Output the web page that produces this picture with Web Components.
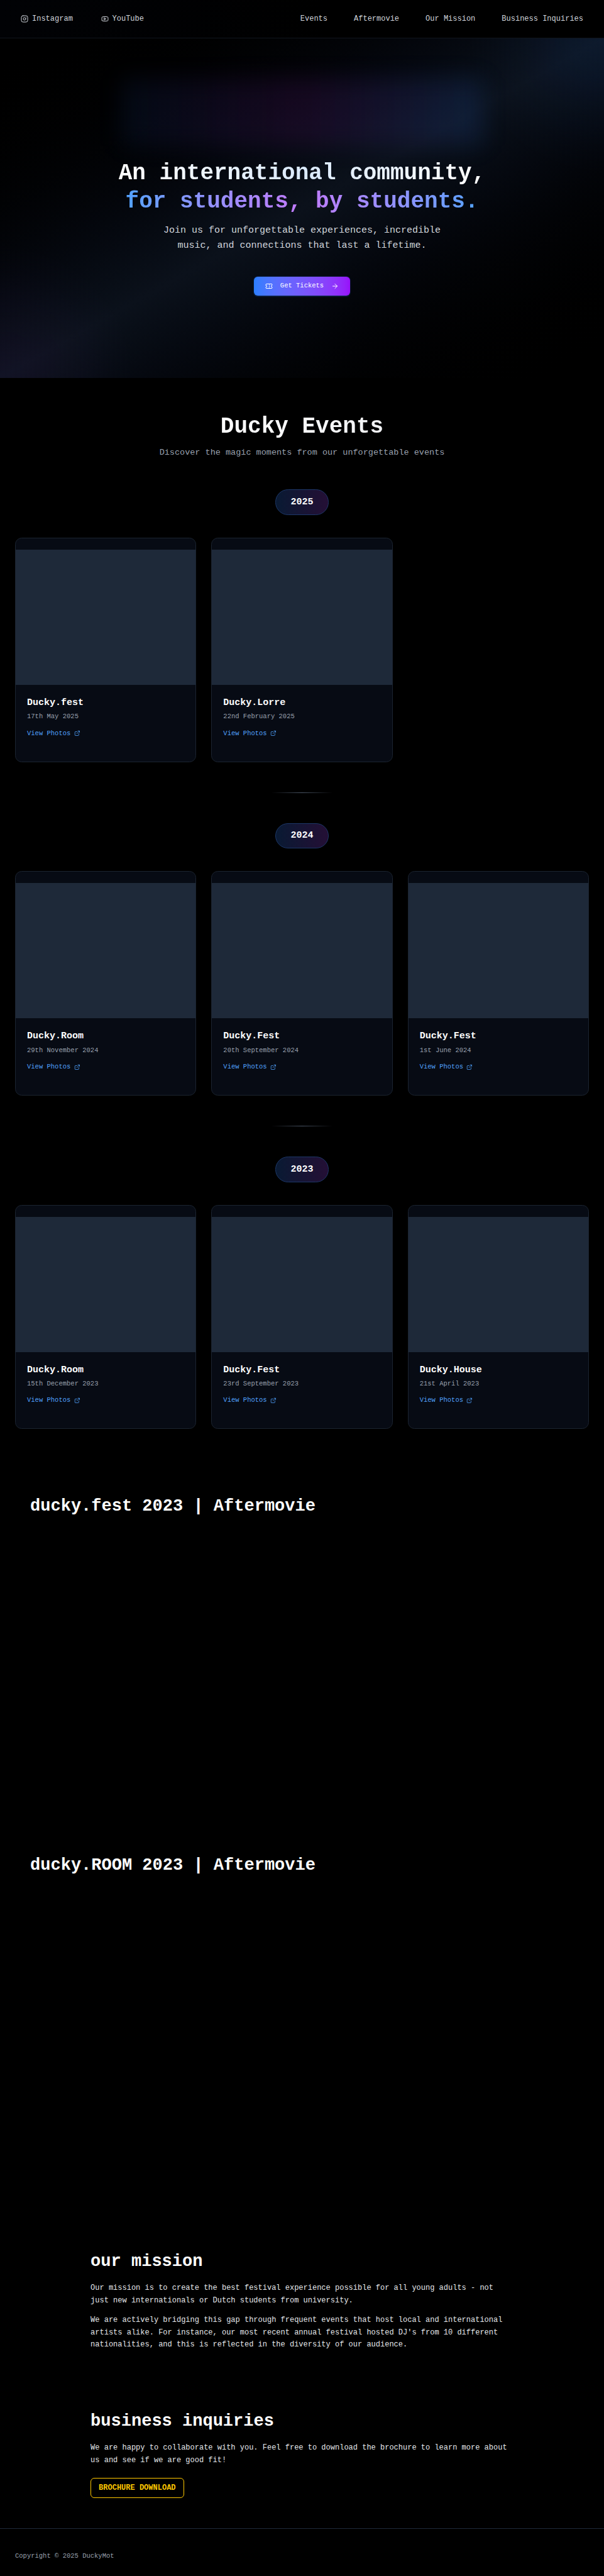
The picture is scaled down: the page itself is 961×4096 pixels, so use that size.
<!DOCTYPE html>
<html lang="en">
<head>
<meta charset="utf-8">
<title>Ducky</title>
<style>
  html { background: #000; font-size: 12.01px; }
  body {
    margin: 0; background: #000; color: #fff;
    font-family: "Liberation Mono", "Courier New", monospace;
    font-size: 1rem; line-height: 1.5; overflow-x: hidden;
  }
  main { display: block; }
  .events { padding: 5rem 2rem 8.99rem; }
  .films { display: flex; flex-direction: column; }
  .copy { padding: 5rem 0 4rem 12rem; display: flex; flex-direction: column; gap: 8rem; }
</style>
</head>
<body>
<site-header>
  <nav-link slot="social" icon="instagram">Instagram</nav-link>
  <nav-link slot="social" icon="youtube">YouTube</nav-link>
  <nav-link>Events</nav-link>
  <nav-link>Aftermovie</nav-link>
  <nav-link>Our Mission</nav-link>
  <nav-link>Business Inquiries</nav-link>
</site-header>
<main>
  <hero-banner>
    <span slot="lead">An international community,</span>
    <span slot="accent">for students, by students.</span>
    <span slot="text">Join us for unforgettable experiences, incredible<br>music, and connections that last a lifetime.</span>
    <ticket-button slot="action">Get Tickets</ticket-button>
  </hero-banner>
  <div class="events">
    <section-title>Ducky Events<span slot="sub">Discover the magic moments from our unforgettable events</span></section-title>
    <year-group year="2025">
      <event-card date="17th May 2025">Ducky.fest</event-card>
      <event-card date="22nd February 2025">Ducky.Lorre</event-card>
    </year-group>
    <soft-divider></soft-divider>
    <year-group year="2024">
      <event-card date="29th November 2024">Ducky.Room</event-card>
      <event-card date="20th September 2024">Ducky.Fest</event-card>
      <event-card date="1st June 2024">Ducky.Fest</event-card>
    </year-group>
    <soft-divider></soft-divider>
    <year-group year="2023">
      <event-card date="15th December 2023">Ducky.Room</event-card>
      <event-card date="23rd September 2023">Ducky.Fest</event-card>
      <event-card date="21st April 2023">Ducky.House</event-card>
    </year-group>
  </div>
  <div class="films">
    <after-movie>ducky.fest 2023 | Aftermovie</after-movie>
    <after-movie>ducky.ROOM 2023 | Aftermovie</after-movie>
  </div>
  <div class="copy">
    <text-section heading="our mission">
      <p>Our mission is to create the best festival experience possible for all young adults - not just new internationals or Dutch students from university.</p>
      <p>We are actively bridging this gap through frequent events that host local and international artists alike. For instance, our most recent annual festival hosted DJ's from 10 different nationalities, and this is reflected in the diversity of our audience.</p>
    </text-section>
    <text-section heading="business inquiries">
      <p>We are happy to collaborate with you. Feel free to download the brochure to learn more about us and see if we are good fit!</p>
      <outline-button slot="action">BROCHURE DOWNLOAD</outline-button>
    </text-section>
  </div>
</main>
<site-footer>Copyright © 2025 DuckyMot</site-footer>

<script>
const ICONS = {
  instagram: '<rect width="20" height="20" x="2" y="2" rx="5"/><path d="M16 11.37A4 4 0 1 1 12.63 8 4 4 0 0 1 16 11.37z"/><path d="M17.5 6.5h.01"/>',
  youtube: '<path d="M2.5 17a24.12 24.12 0 0 1 0-10 2 2 0 0 1 1.4-1.4 49.56 49.56 0 0 1 16.2 0A2 2 0 0 1 21.5 7a24.12 24.12 0 0 1 0 10 2 2 0 0 1-1.4 1.4 49.55 49.55 0 0 1-16.2 0A2 2 0 0 1 2.5 17"/><path d="m10 15 5-3-5-3z"/>',
  ticket: '<path d="M2 9a3 3 0 0 1 0 6v2a2 2 0 0 0 2 2h16a2 2 0 0 0 2-2v-2a3 3 0 0 1 0-6V7a2 2 0 0 0-2-2H4a2 2 0 0 0-2 2Z"/><path d="M13 5v2M13 17v2M13 11v2"/>',
  arrow: '<path d="M5 12h14M12 5l7 7-7 7"/>',
  external: '<path d="M15 3h6v6M10 14 21 3M18 13v6a2 2 0 0 1-2 2H5a2 2 0 0 1-2-2V8a2 2 0 0 1 2-2h6"/>'
};
const icon = name =>
  `<svg viewBox="0 0 24 24" fill="none" stroke="currentColor" stroke-width="2" stroke-linecap="round" stroke-linejoin="round">${ICONS[name]}</svg>`;

// Sizes in the component styles are written in "u": 16u = 1rem.
const toRem = css => css.replace(/(-?[\d.]+)u\b/g, (_, n) => `${+(n / 16).toFixed(5)}rem`);

function define(tag, css, render) {
  const sheet = `<style>${toRem(css)}</style>`;
  customElements.define(tag, class extends HTMLElement {
    connectedCallback() {
      if (this.shadowRoot) return;
      this.attachShadow({ mode: 'open' }).innerHTML = sheet + render(this);
    }
  });
}

define('site-header', `
    :host { display: flex; justify-content: space-between; align-items: center; box-sizing: border-box;
      height: 81u; padding: 0 44u; border-bottom: 1px solid #10151d;
      background: linear-gradient(to right, #010205, #000 55%); }
    div { display: flex; }
    .social { gap: 59.6u; }
    .pages { gap: 56u; }`, () => `
  <div class="social"><slot name="social"></slot></div>
  <div class="pages"><slot></slot></div>`);

define('nav-link', `
    :host { display: flex; align-items: center; gap: 8u; color: #d1d5dc; line-height: 24u; white-space: nowrap; }
    svg { display: block; width: 16u; height: 16u; }`, el => `
  ${el.getAttribute('icon') ? icon(el.getAttribute('icon')) : ''}<span><slot></slot></span>`);

define('hero-banner', `
    :host { display: flex; flex-direction: column; align-items: center; position: relative; overflow: hidden;
      box-sizing: border-box; height: 720u; padding-top: 256u;
      background:
        radial-gradient(circle at 100% 0, rgba(43,127,255,.08), rgba(43,127,255,.07) 70u, rgba(43,127,255,.04) 150u, rgba(43,127,255,.01) 230u, transparent 290u),
        radial-gradient(circle at 0 100%, rgba(150,60,220,.05), rgba(150,60,220,.045) 70u, rgba(150,60,220,.026) 150u, rgba(150,60,220,.008) 230u, transparent 290u),
        linear-gradient(to bottom right in oklab, #000, #0b111b 50%, #000); }
    .glow { position: absolute; left: 256u; top: 84u; width: 768u; height: 144u; border-radius: 8u; filter: blur(24u);
      background: linear-gradient(to right, rgba(43,127,255,.075), rgba(173,30,200,.11) 50%, rgba(43,127,255,.12)); }
    h1 { margin: 0; display: flex; flex-direction: column; align-items: center; position: relative;
      font-size: 48u; line-height: 60u; font-weight: 700; white-space: nowrap; }
    h1 span { color: transparent; background-clip: text; -webkit-background-clip: text; }
    .lead { background-image: linear-gradient(to right in oklab, #fff, #dbeafe, #fff); }
    .accent { background-image: linear-gradient(to right in oklab, #51a2ff, #c27aff, #51a2ff); }
    p { margin: 16u 0 48u; position: relative; text-align: center; font-size: 20u; line-height: 32.5u; color: #d1d5dc; }
    slot[name=action] { display: block; position: relative; }`, () => `
  <div class="glow"></div>
  <h1><span class="lead"><slot name="lead"></slot></span><span class="accent"><slot name="accent"></slot></span></h1>
  <p><slot name="text"></slot></p>
  <slot name="action"></slot>`);

define('ticket-button', `
    :host { display: flex; align-items: center; gap: 16u; height: 40u; padding: 0 24u; border-radius: 8u; position: relative;
      font-size: 14u; line-height: 20u; color: #fff;
      background: linear-gradient(to right in oklab, #2b7fff, #9810fa); box-shadow: 0 1u 3u rgba(43,127,255,.4); }
    svg { display: block; width: 16u; height: 16u; }`, () => `
  ${icon('ticket')}<span><slot></slot></span>${icon('arrow')}`);

define('section-title', `
    :host { display: block; text-align: center; }
    h2 { margin: 0; font-size: 48u; line-height: 48u; font-weight: 700; height: 48u; }
    h2 span { display: block; padding-bottom: 8u; color: transparent; background: linear-gradient(to right, #fff 35%, #f3f4f6 60%, #d1d5dc);
      background-clip: text; -webkit-background-clip: text; }
    p { margin: 16u 0 64u; font-size: 18u; line-height: 28u; color: #99a1af; }`, () => `
  <h2><span><slot></slot></span></h2><p><slot name="sub"></slot></p>`);

define('year-group', `
    :host { display: flex; flex-direction: column; align-items: center; gap: 48u; }
    .pill { display: flex; align-items: center; justify-content: center; box-sizing: border-box; width: 114u; height: 54u;
      border: 1px solid #1d3768; border-radius: 27u;
      font-size: 20u; line-height: 28u; font-weight: 700;
      background: linear-gradient(to right, #091a33, #240f35); }
    .grid { display: grid; grid-template-columns: repeat(3, 1fr); gap: 32u; width: 100%; }`, el => `
  <div class="pill">${el.getAttribute('year')}</div>
  <div class="grid"><slot></slot></div>`);

define('event-card', `
    :host { display: block; box-sizing: border-box; height: 475.3u; border: 1px solid #1b2430; border-radius: 14u;
      padding-top: 24u; background: #070b14; overflow: hidden; }
    .photo { height: 286.3u; background: #1e2939; }
    .body { display: flex; flex-direction: column; padding: 24u 24u 0; }
    h3 { margin: 0 0 6u; font-size: 20u; line-height: 28u; font-weight: 700; }
    .date { font-size: 14u; line-height: 20u; color: #99a1af; margin-bottom: 15u; }
    a { display: flex; align-items: center; gap: 7u; font-size: 14u; line-height: 20u; color: #51a2ff; }
    svg { display: block; width: 13u; height: 13u; }`, el => `
  <div class="photo"></div>
  <div class="body">
    <h3><slot></slot></h3>
    <div class="date">${el.getAttribute('date')}</div>
    <a>View Photos${icon('external')}</a>
  </div>`);

define('soft-divider', `
    :host { display: block; width: 128u; height: 1px; margin: 64u auto;
      background: linear-gradient(to right, transparent, #4a5565, transparent); }`, () => '');

define('after-movie', `
    :host { display: block; box-sizing: border-box; height: 760u; padding: 0 64u; }
    h2 { margin: 0; font-size: 36u; line-height: 40u; font-weight: 700; }`, () => `
  <h2><slot></slot></h2>`);

define('text-section', `
    :host { display: block; width: 896u; }
    h2 { margin: 0 0 24u; font-size: 36u; line-height: 40u; font-weight: 700; }
    div { display: flex; flex-direction: column; gap: 16u; line-height: 26u; color: #e5e7eb; }
    ::slotted(p) { margin: 0; }
    ::slotted(outline-button) { margin-top: 24u; }`, el => `
  <h2>${el.getAttribute('heading')}</h2>
  <div><slot></slot></div>
  <slot name="action"></slot>`);

define('outline-button', `
    :host { display: flex; align-items: center; box-sizing: border-box; width: fit-content; height: 42u; padding: 0 16u;
      border: 1px solid #fdc700; border-radius: 8u; color: #fdc700; font-weight: 700; line-height: 24u; }`, () => `
  <slot></slot>`);

define('site-footer', `
    :host { display: block; box-sizing: border-box; height: 99.8u; padding: 48.2u 32u 0; border-top: 1px solid #1e2939;
      font-size: 14u; line-height: 20u; color: #99a1af; }`, () => `
  <slot></slot>`);
</script>
</body>
</html>
